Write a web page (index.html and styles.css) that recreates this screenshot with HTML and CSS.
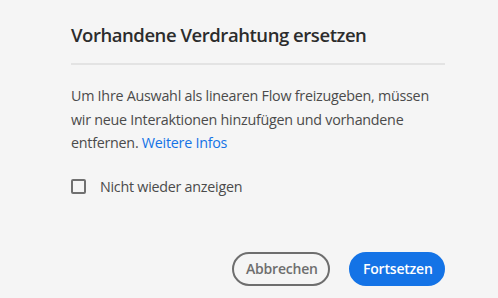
FILE: index.html
```html
<!DOCTYPE html>
<html lang="de">
<head>
<meta charset="utf-8">
<link rel="stylesheet" href="styles.css">
</head>
<body>
<div class="dialog">
  <h1 class="title">Vorhandene Verdrahtung ersetzen</h1>
  <div class="divider"></div>
  <p class="text">Um Ihre Auswahl als linearen Flow freizugeben, müssen wir neue Interaktionen hinzufügen und vorhandene entfernen. <a class="link" href="#">Weitere Infos</a></p>
  <label class="check"><span class="box"></span><span class="check-label">Nicht wieder anzeigen</span></label>
  <div class="buttons">
    <button class="btn btn-secondary">Abbrechen</button>
    <button class="btn btn-primary">Fortsetzen</button>
  </div>
</div>
</body>
</html>
```
FILE: styles.css
```css
html, body {
  margin: 0;
  padding: 0;
  background: #f5f5f5;
}
body {
  width: 498px;
  height: 298px;
  overflow: hidden;
  font-family: "Open Sans", "Noto Sans", sans-serif;
}
.dialog {
  margin-left: 71px;
  width: 374px;
  padding-top: 22px;
  display: flex;
  flex-direction: column;
}
.title {
  margin: 0;
  font-size: 18.5px;
  line-height: 26px;
  font-weight: 600;
  color: #2c2c2c;
  letter-spacing: -0.45px;
}
.divider {
  margin-top: 15px;
  height: 2px;
  background: #e3e3e3;
}
.text {
  margin: 19px 0 0 0;
  font-size: 14.3px;
  line-height: 23.5px;
  color: #4b4b4b;
  letter-spacing: -0.25px;
}
.link {
  color: #1473e6;
  text-decoration: none;
}
.check {
  margin-top: 21px;
  display: flex;
  align-items: center;
  height: 22px;
}
.box {
  width: 11px;
  height: 11px;
  border: 2px solid #707070;
  border-radius: 2px;
  box-sizing: content-box;
}
.check-label {
  margin-left: 14px;
  font-size: 14.3px;
  color: #4b4b4b;
  letter-spacing: -0.25px;
}
.buttons {
  margin-top: 54px;
  display: flex;
  justify-content: flex-end;
  gap: 19px;
}
.btn {
  height: 34px;
  border-radius: 17px;
  font-family: "Open Sans", "Noto Sans", sans-serif;
  font-size: 14px;
  font-weight: 600;
  padding: 0 12px;
  letter-spacing: -0.2px;
}
.btn-secondary {
  width: 98px;
  background: transparent;
  border: 2px solid #6e6e6e;
  color: #6e6e6e;
}
.btn-primary {
  width: 96px;
  background: #1473e6;
  border: 2px solid #1473e6;
  color: #ffffff;
}
```
